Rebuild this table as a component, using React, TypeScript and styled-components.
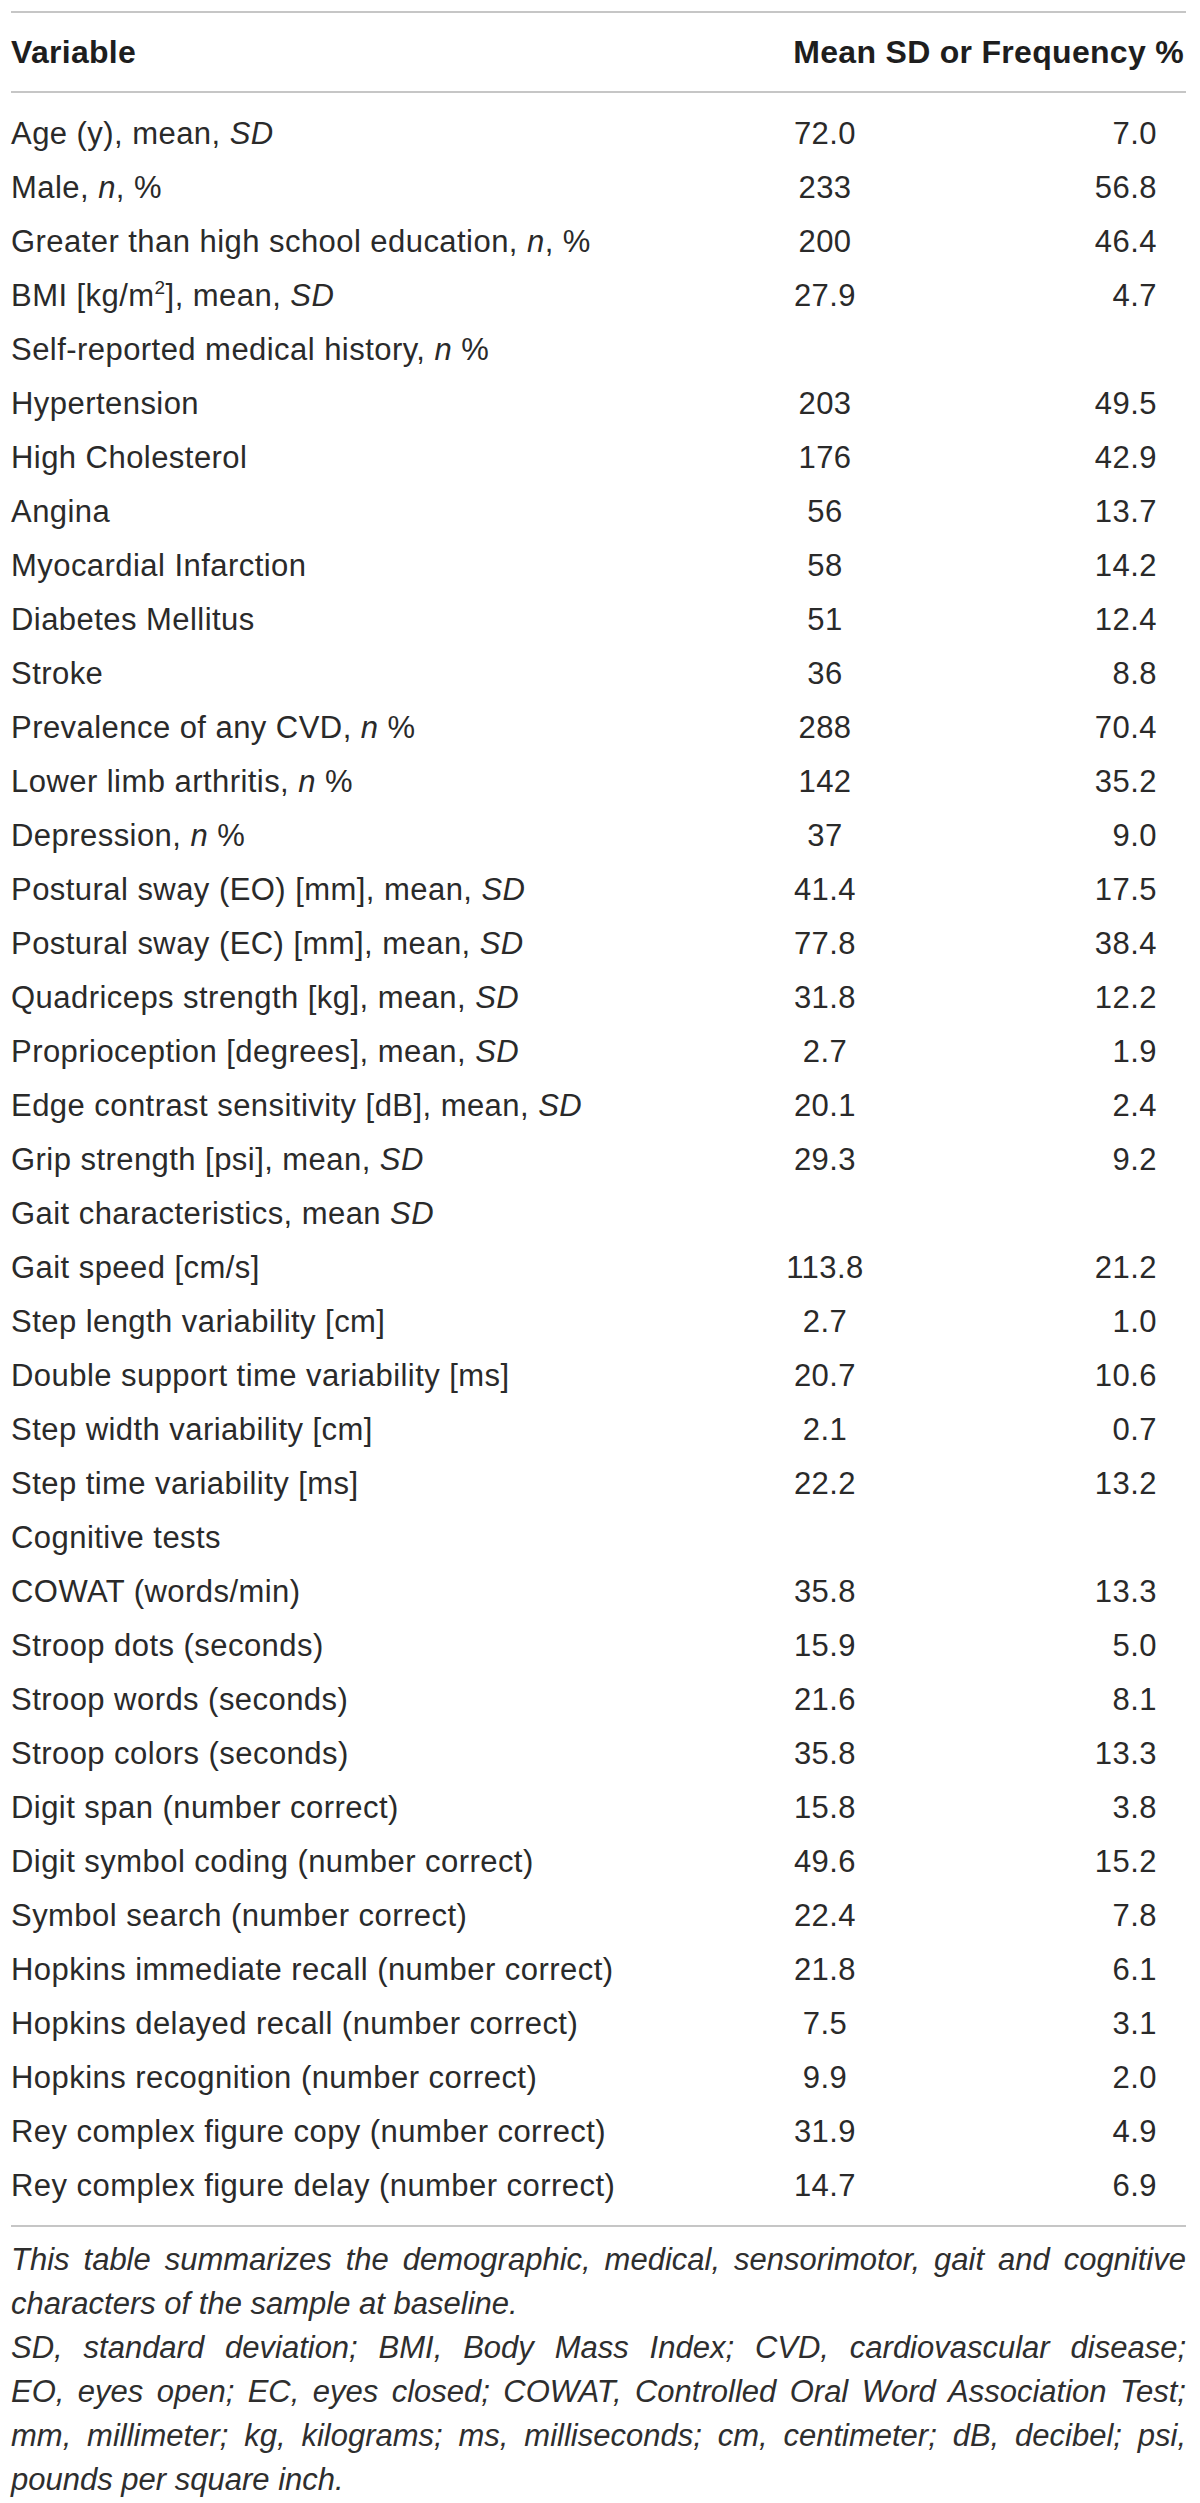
import React from 'react';
import styled, { createGlobalStyle } from 'styled-components';

const GlobalStyle = createGlobalStyle`
  html, body {
    margin: 0;
    padding: 0;
    background: #ffffff;
  }
  body {
    font-family: "Liberation Sans", Arial, sans-serif;
    color: #2a2a2a;
  }
`;

const Page = styled.div`
  padding: 11px 14px 0 11px;
  width: 1175px;
`;

const Table = styled.div`
  border-top: 2px solid #c6c6c6;
`;

const HeaderRow = styled.div`
  display: grid;
  grid-template-columns: 734px 160px 1fr;
  align-items: center;
  height: 78px;
  border-bottom: 2px solid #c6c6c6;
  font-size: 32px;
  font-weight: 700;
  letter-spacing: 0.3px;
  color: #1e1e1e;
`;

const HeaderCell = styled.div<{ $span?: boolean }>`
  grid-column: ${(p) => (p.$span ? '2 / 4' : 'auto')};
  text-align: ${(p) => (p.$span ? 'right' : 'left')};
  padding-right: ${(p) => (p.$span ? '2px' : '0')};
  white-space: nowrap;
`;

const Body = styled.div`
  padding: 14px 0 12px;
  border-bottom: 2px solid #c6c6c6;
`;

const Row = styled.div`
  display: grid;
  grid-template-columns: 734px 160px 1fr;
  align-items: center;
  height: 54px;
  font-size: 31px;
  letter-spacing: 0.45px;
`;

const Label = styled.div`
  white-space: nowrap;
`;

const Mean = styled.div`
  text-align: center;
`;

const Spread = styled.div`
  text-align: right;
  padding-right: 29px;
`;

const I = styled.em`
  font-style: italic;
`;

const Sup = styled.sup`
  font-size: 19px;
  line-height: 0;
  vertical-align: 12px;
`;

const Notes = styled.div`
  padding-top: 11px;
  font-size: 31px;
  font-style: italic;
  line-height: 44px;
  color: #2e2e2e;
`;

const NoteLine = styled.div<{ $last?: boolean }>`
  text-align: justify;
  text-align-last: ${(p) => (p.$last ? 'left' : 'justify')};
  white-space: nowrap;
`;

type Item = { label: React.ReactNode; mean?: string; spread?: string };

const rows: Item[] = [
  { label: <>Age (y), mean, <I>SD</I></>, mean: '72.0', spread: '7.0' },
  { label: <>Male, <I>n</I>, %</>, mean: '233', spread: '56.8' },
  { label: <>Greater than high school education, <I>n</I>, %</>, mean: '200', spread: '46.4' },
  { label: <>BMI [kg/m<Sup>2</Sup>], mean, <I>SD</I></>, mean: '27.9', spread: '4.7' },
  { label: <>Self-reported medical history, <I>n</I> %</> },
  { label: 'Hypertension', mean: '203', spread: '49.5' },
  { label: 'High Cholesterol', mean: '176', spread: '42.9' },
  { label: 'Angina', mean: '56', spread: '13.7' },
  { label: 'Myocardial Infarction', mean: '58', spread: '14.2' },
  { label: 'Diabetes Mellitus', mean: '51', spread: '12.4' },
  { label: 'Stroke', mean: '36', spread: '8.8' },
  { label: <>Prevalence of any CVD, <I>n</I> %</>, mean: '288', spread: '70.4' },
  { label: <>Lower limb arthritis, <I>n</I> %</>, mean: '142', spread: '35.2' },
  { label: <>Depression, <I>n</I> %</>, mean: '37', spread: '9.0' },
  { label: <>Postural sway (EO) [mm], mean, <I>SD</I></>, mean: '41.4', spread: '17.5' },
  { label: <>Postural sway (EC) [mm], mean, <I>SD</I></>, mean: '77.8', spread: '38.4' },
  { label: <>Quadriceps strength [kg], mean, <I>SD</I></>, mean: '31.8', spread: '12.2' },
  { label: <>Proprioception [degrees], mean, <I>SD</I></>, mean: '2.7', spread: '1.9' },
  { label: <>Edge contrast sensitivity [dB], mean, <I>SD</I></>, mean: '20.1', spread: '2.4' },
  { label: <>Grip strength [psi], mean, <I>SD</I></>, mean: '29.3', spread: '9.2' },
  { label: <>Gait characteristics, mean <I>SD</I></> },
  { label: 'Gait speed [cm/s]', mean: '113.8', spread: '21.2' },
  { label: 'Step length variability [cm]', mean: '2.7', spread: '1.0' },
  { label: 'Double support time variability [ms]', mean: '20.7', spread: '10.6' },
  { label: 'Step width variability [cm]', mean: '2.1', spread: '0.7' },
  { label: 'Step time variability [ms]', mean: '22.2', spread: '13.2' },
  { label: 'Cognitive tests' },
  { label: 'COWAT (words/min)', mean: '35.8', spread: '13.3' },
  { label: 'Stroop dots (seconds)', mean: '15.9', spread: '5.0' },
  { label: 'Stroop words (seconds)', mean: '21.6', spread: '8.1' },
  { label: 'Stroop colors (seconds)', mean: '35.8', spread: '13.3' },
  { label: 'Digit span (number correct)', mean: '15.8', spread: '3.8' },
  { label: 'Digit symbol coding (number correct)', mean: '49.6', spread: '15.2' },
  { label: 'Symbol search (number correct)', mean: '22.4', spread: '7.8' },
  { label: 'Hopkins immediate recall (number correct)', mean: '21.8', spread: '6.1' },
  { label: 'Hopkins delayed recall (number correct)', mean: '7.5', spread: '3.1' },
  { label: 'Hopkins recognition (number correct)', mean: '9.9', spread: '2.0' },
  { label: 'Rey complex figure copy (number correct)', mean: '31.9', spread: '4.9' },
  { label: 'Rey complex figure delay (number correct)', mean: '14.7', spread: '6.9' },
];

// footnote lines are kept as printed, each wrapped line justified
const notes: { text: string; last?: boolean }[] = [
  { text: 'This table summarizes the demographic, medical, sensorimotor, gait and cognitive' },
  { text: 'characters of the sample at baseline.', last: true },
  { text: 'SD, standard deviation; BMI, Body Mass Index; CVD, cardiovascular disease;' },
  { text: 'EO, eyes open; EC, eyes closed; COWAT, Controlled Oral Word Association Test;' },
  { text: 'mm, millimeter; kg, kilograms; ms, milliseconds; cm, centimeter; dB, decibel; psi,' },
  { text: 'pounds per square inch.', last: true },
];

export default function App() {
  return (
    <>
      <GlobalStyle />
      <Page>
        <Table>
          <HeaderRow>
            <HeaderCell>Variable</HeaderCell>
            <HeaderCell $span>Mean SD or Frequency %</HeaderCell>
          </HeaderRow>
          <Body>
            {rows.map((r, i) => (
              <Row key={i}>
                <Label>{r.label}</Label>
                <Mean>{r.mean}</Mean>
                <Spread>{r.spread}</Spread>
              </Row>
            ))}
          </Body>
        </Table>
        <Notes>
          {notes.map((n, i) => (
            <NoteLine key={i} $last={n.last}>
              {n.text}
            </NoteLine>
          ))}
        </Notes>
      </Page>
    </>
  );
}
